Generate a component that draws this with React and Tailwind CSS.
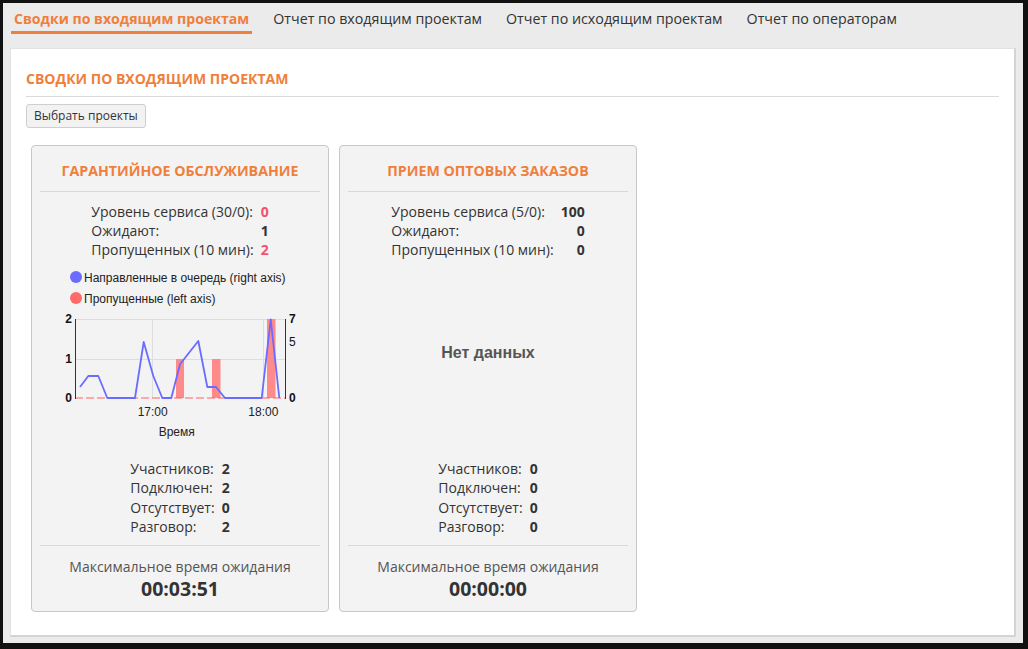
import React from 'react'

const tabs = [
  'Сводки по входящим проектам',
  'Отчет по входящим проектам',
  'Отчет по исходящим проектам',
  'Отчет по операторам',
]

const projects = [
  {
    title: 'Гарантийное обслуживание',
    stats: [
      ['Уровень сервиса (30/0):', '0', true],
      ['Ожидают:', '1', false],
      ['Пропущенных (10 мин):', '2', true],
    ],
    chart: true,
    agents: [['Участников:', '2'], ['Подключен:', '2'], ['Отсутствует:', '0'], ['Разговор:', '2']],
    wait: '00:03:51',
  },
  {
    title: 'Прием оптовых заказов',
    stats: [
      ['Уровень сервиса (5/0):', '100', false],
      ['Ожидают:', '0', false],
      ['Пропущенных (10 мин):', '0', false],
    ],
    chart: false,
    agents: [['Участников:', '0'], ['Подключен:', '0'], ['Отсутствует:', '0'], ['Разговор:', '0']],
    wait: '00:00:00',
  },
]

// queued calls (right axis), in chart px
const linePts = [
  [48, 125], [56.3, 114], [66.3, 114], [75.3, 136], [103, 136], [111.7, 80], [121.3, 114],
  [130.3, 136], [139.3, 136], [148, 102.3], [166.3, 79], [175.3, 125], [184, 125],
  [193, 136], [229.7, 136], [238.7, 57.3], [247.3, 136],
]

function Chart() {
  return (
    <svg width="296" height="182" viewBox="0 0 296 182" className="font-['Liberation_Sans',Arial,sans-serif] text-[12px]">
      {/* legend */}
      <circle cx="44" cy="15" r="6" fill="#6b6bff" />
      <text x="52" y="19.5" fill="#222">Направленные в очередь (right axis)</text>
      <circle cx="44" cy="36" r="6" fill="#ff6b6b" />
      <text x="52" y="40.5" fill="#222">Пропущенные (left axis)</text>

      {/* grid */}
      <line x1="43" y1="57.5" x2="253" y2="57.5" stroke="#ddd" />
      <line x1="43" y1="97.5" x2="253" y2="97.5" stroke="#ddd" />
      <line x1="120.5" y1="57" x2="120.5" y2="136" stroke="#ddd" />
      <line x1="231.5" y1="57" x2="231.5" y2="136" stroke="#ddd" />

      {/* missed bars */}
      <rect x="144" y="97" width="8" height="39" fill="#ff8a8a" />
      <rect x="180" y="97" width="8.5" height="39" fill="#ff8a8a" />
      <rect x="235" y="57" width="8.5" height="79" fill="#ff8a8a" />
      <line x1="43" y1="136" x2="253" y2="136" stroke="#ff6060" strokeDasharray="8 3" />

      <polyline
        points={linePts.map(p => p.join(',')).join(' ')}
        fill="none"
        stroke="#6b6bff"
        strokeWidth="1.8"
        strokeLinejoin="round"
      />

      {/* axes */}
      <line x1="43.5" y1="57" x2="43.5" y2="137" stroke="#333" />
      <line x1="253.5" y1="57" x2="253.5" y2="137" stroke="#333" />

      <g fill="#111" fontWeight="bold">
        <text x="40" y="61" textAnchor="end">2</text>
        <text x="40" y="101" textAnchor="end">1</text>
        <text x="40" y="140" textAnchor="end">0</text>
        <text x="257" y="61">7</text>
        <text x="257" y="140">0</text>
      </g>
      <text x="257" y="84" fill="#111">5</text>

      <text x="120.7" y="154" textAnchor="middle" fill="#222">17:00</text>
      <text x="231.3" y="154" textAnchor="middle" fill="#222">18:00</text>
      <text x="144.7" y="174" textAnchor="middle" fill="#222">Время</text>
    </svg>
  )
}

function ProjectCard({ p }) {
  return (
    <div className="w-[298px] bg-[#f3f3f3] border border-[#c8c8c8] rounded-[4px] flex flex-col">
      <div className="pt-[15px] pb-[10px] mx-[8px] border-b border-[#d8d8d8] text-center text-[14.2px] leading-[20px] font-bold uppercase text-[#ef7f3c]">
        {p.title}
      </div>

      <div className="mx-auto mt-[10px] grid grid-cols-[auto_auto] gap-x-[7px] text-[14px] leading-[19px] text-[#333]">
        {p.stats.map(([label, value, alert]) => (
          <React.Fragment key={label}>
            <span>{label}</span>
            <span className={`text-right font-bold ${alert ? 'text-[#f4516c]' : 'text-[#333]'}`}>{value}</span>
          </React.Fragment>
        ))}
      </div>

      <div className="h-[182px] mt-[3px] flex items-center justify-center">
        {p.chart ? (
          <Chart />
        ) : (
          <span className="text-[16px] font-bold text-[#555] font-['Liberation_Sans',Arial,sans-serif]">
            Нет данных
          </span>
        )}
      </div>

      <div className="mx-auto mt-[15px] grid grid-cols-[auto_auto] gap-x-[7px] text-[14px] leading-[19.3px] text-[#333]">
        {p.agents.map(([label, value]) => (
          <React.Fragment key={label}>
            <span>{label}</span>
            <span className="font-bold">{value}</span>
          </React.Fragment>
        ))}
      </div>

      <div className="mx-[8px] mt-[9px] border-t border-[#d8d8d8] pt-[11px] pb-[9px] text-center">
        <div className="text-[14px] leading-[19px] text-[#555]">Максимальное время ожидания</div>
        <div className="text-[19.5px] leading-[26px] font-bold text-[#333]">{p.wait}</div>
      </div>
    </div>
  )
}

export default function App() {
  return (
    <div className="w-[1028px] h-[649px] bg-[#111] pt-[3px] pl-[3px] font-['Open_Sans','Liberation_Sans',sans-serif]">
      <div className="w-[1020px] h-[640px] bg-[#ebebeb] overflow-hidden">
        {/* Tabs */}
        <div className="flex gap-[18px] pl-[8px] pt-[6px]">
          {tabs.map((tab, i) => (
            <div
              key={tab}
              className={`px-[3px] pb-[2px] leading-[20px] border-b-[3px] ${
                i === 0
                  ? 'border-[#ef7f3c] text-[#ef7f3c] font-bold text-[14.1px]'
                  : 'border-transparent text-[#333] text-[14.25px]'
              }`}
            >
              {tab}
            </div>
          ))}
        </div>

        {/* Panel */}
        <div className="mt-[14px] ml-[7px] w-[1006px] h-[589px] bg-white border border-[#e2e2e2] border-r-2 border-b-2 border-r-[#d4d4d4] border-b-[#d4d4d4] pt-[20px] px-[15px]">
          <div className="pb-[7px] border-b border-[#dadada] text-[14px] leading-[20px] font-bold uppercase text-[#ef7f3c]">
            Сводки по входящим проектам
          </div>
          <button className="mt-[7px] h-[24px] px-[7px] bg-[#f2f2f2] border border-[#cfcfcf] rounded-[3px] text-[12px] text-[#333]">
            Выбрать проекты
          </button>

          <div className="mt-[17px] ml-[5px] flex gap-[10px]">
            {projects.map(p => (
              <ProjectCard key={p.title} p={p} />
            ))}
          </div>
        </div>
      </div>
    </div>
  )
}
